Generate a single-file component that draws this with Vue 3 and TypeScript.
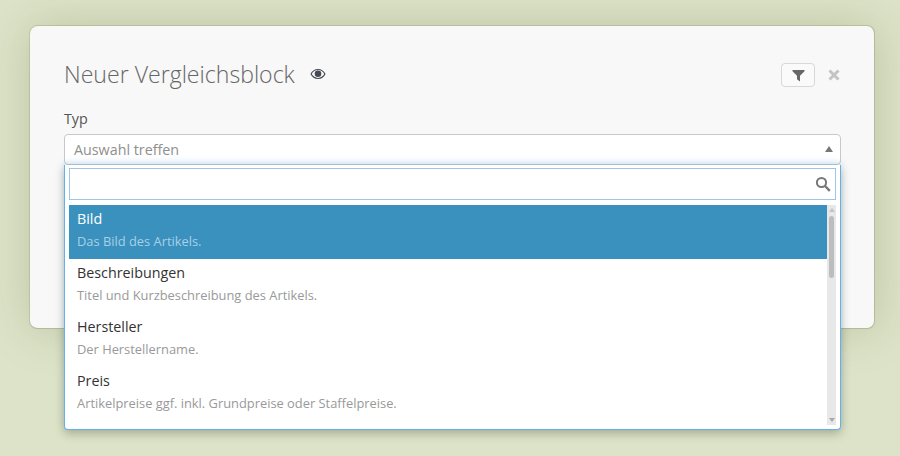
<script setup lang="ts">
interface Option { title: string; desc: string }
const options: Option[] = [
  { title: 'Bild', desc: 'Das Bild des Artikels.' },
  { title: 'Beschreibungen', desc: 'Titel und Kurzbeschreibung des Artikels.' },
  { title: 'Hersteller', desc: 'Der Herstellername.' },
  { title: 'Preis', desc: 'Artikelpreise ggf. inkl. Grundpreise oder Staffelpreise.' },
]
</script>

<template>
  <div class="page">
    <section class="modal">
      <header class="head">
        <h1 class="title">Neuer Vergleichsblock</h1>
        <svg class="eye" width="16" height="12" viewBox="0 0 16 12">
          <path fill="#444a52" d="M8 1C4.600 1 1.800 3 .4 6c1.400 3 4.200 5 7.600 5s6.200-2 7.600-5C14.200 3 11.400 1 8 1zm0 8.900C5.300 9.900 3 8.300 1.700 6 3 3.700 5.300 2.100 8 2.100s5 1.600 6.300 3.900C13 8.300 10.700 9.900 8 9.900z"/>
          <circle cx="8" cy="5.800" r="3.300" fill="#444a52"/>
        </svg>
        <div class="spacer"></div>
        <button class="filter" type="button">
          <svg width="13" height="13" viewBox="0 0 13 13"><path fill="#666" d="M.5 1h12v1.300L8 6.800v5.700L5 10.200V6.800L.5 2.300z"/></svg>
        </button>
        <svg class="close" width="12" height="12" viewBox="0 0 12 12"><path stroke="#c4c4c4" stroke-width="3" d="M1.500 1.500l9 9M10.500 1.500l-9 9"/></svg>
      </header>
      <label class="label">Typ</label>
      <div class="field">
        <div class="select">
          <span>Auswahl treffen</span>
          <i class="caret"></i>
        </div>
        <div class="drop">
          <div class="search">
            <svg width="16" height="16" viewBox="0 0 16 16"><circle cx="6.500" cy="6.500" r="4.600" fill="none" stroke="#777" stroke-width="2"/><path d="M10 10l4.800 4.800" stroke="#777" stroke-width="2.400"/></svg>
          </div>
          <div class="listwrap">
            <ul class="list">
              <li v-for="(o, i) in options" :key="o.title" class="opt" :class="{ active: i === 0 }">
                <div class="opt-title">{{ o.title }}</div>
                <div class="opt-desc">{{ o.desc }}</div>
              </li>
            </ul>
            <div class="scroll">
              <i class="arrow up"></i>
              <div class="thumb"></div>
              <i class="arrow down"></i>
            </div>
          </div>
        </div>
      </div>
    </section>
  </div>
</template>

<style>
html, body { margin: 0; padding: 0; background: #dde3c8; }
</style>

<style scoped>
.page {
  width: 900px; height: 456px; box-sizing: border-box; padding: 26px 25px 0 30px;
  background: #dde3c8; overflow: hidden;
  font-family: "Open Sans", "Liberation Sans", sans-serif;
}
.modal {
  height: 303px; box-sizing: border-box; padding: 30px 33px 0 34px;
  background: #f8f8f8; border-radius: 8px;
  border: 1px solid #b4ba9a; border-width: 0 1px 1px 0;
  box-shadow: 0 0 45px rgba(120,130,80,.32), 0 -1px 0 #c4c9ac, -1px 0 0 #c8cdb2;
}
.head { display: flex; align-items: center; height: 36px; }
.title { margin: 0; font-size: 23.100px; font-weight: 300; color: #666; line-height: 36px; }
.eye { margin-left: 15px; }
.spacer { flex: 1; }
.filter {
  width: 34px; height: 24px; padding: 0; box-sizing: border-box; margin-top: 2px;
  display: flex; align-items: center; justify-content: center;
  background: #fafafa; border: 1px solid #d8d8d8; border-radius: 4px;
}
.close { margin-left: 13px; margin-right: 1px; margin-top: 1px; }
.label { display: block; margin-top: 17px; height: 20px; font-size: 14.300px; line-height: 20px; color: #555; }
.field { position: relative; margin-top: 5px; }
.select {
  height: 31px; box-sizing: border-box; padding: 0 7px 0 9px;
  display: flex; align-items: center; justify-content: space-between;
  background: #fff; border: 1px solid #c8c8c8; border-radius: 4px;
  font-size: 14.300px; color: #8f8f8f;
}
.caret { width: 0; height: 0; border: 4px solid transparent; border-top: 0; border-bottom: 6px solid #777; margin-top: -2px; }
.drop {
  position: absolute; left: 0; right: 0; top: 31px; height: 265px; box-sizing: border-box;
  background: #fff; border: 1px solid #66afe9; border-top: 0;
  border-radius: 0 0 4px 4px; padding: 3px 4px 0;
  box-shadow: 0 4px 10px rgba(60,70,40,.32), 0 -3px 6px rgba(102,175,233,.25);
}
.search {
  height: 32px; box-sizing: border-box; border: 1px solid #9cc5e8;
  display: flex; align-items: center; justify-content: flex-end; padding-right: 4px; background: #fff;
}
.listwrap { display: flex; height: 220px; margin-top: 5px; overflow: hidden; }
.list { flex: 1; margin: 0; padding: 0; list-style: none; }
.opt { height: 54px; box-sizing: border-box; padding: 3px 8px 0; }
.opt.active { background: #3a91be; }
.opt-title { font-size: 14.300px; line-height: 22px; color: #333; }
.opt-desc { font-size: 12.870px; line-height: 22px; color: #999; }
.active .opt-title { color: #fff; }
.active .opt-desc { color: #a8d0e6; }
.scroll {
  width: 9px; background: #e8e8e8; display: flex; flex-direction: column; align-items: center; position: relative;
}
.thumb { position: absolute; left: 2px; top: 11px; width: 5px; height: 62px; background: #bdbdbd; border-radius: 3px; }
.arrow { position: absolute; width: 0; height: 0; border: 3px solid transparent; }
.arrow.up { top: 3px; border-top: 0; border-bottom: 4px solid #c4c4c4; }
.arrow.down { bottom: 3px; border-bottom: 0; border-top: 4px solid #a8a8a8; }
</style>
